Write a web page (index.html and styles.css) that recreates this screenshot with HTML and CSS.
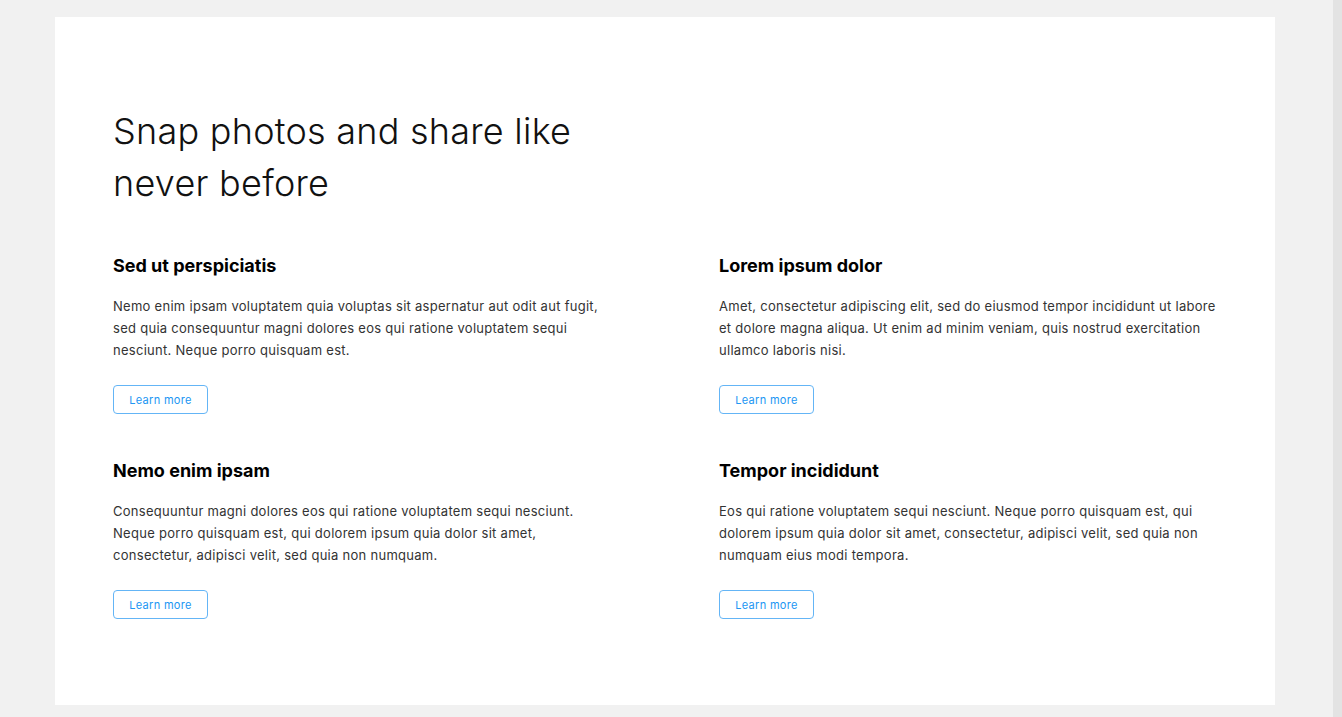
FILE: index.html
```html
<!DOCTYPE html>
<html lang="en">
<head>
<meta charset="utf-8">
<title>Snap photos</title>
<link rel="stylesheet" href="styles.css">
</head>
<body>
<div class="viewport">
  <main class="card">
    <h1 class="title">Snap photos and share like<br>never before</h1>
    <div class="features">
      <section class="feature">
        <h2 class="feature-title">Sed ut perspiciatis</h2>
        <p class="feature-text">Nemo enim ipsam voluptatem quia voluptas sit aspernatur aut odit aut fugit, sed quia consequuntur magni dolores eos qui ratione voluptatem sequi nesciunt. Neque porro quisquam est.</p>
        <a class="btn" href="#">Learn more</a>
      </section>
      <section class="feature">
        <h2 class="feature-title">Lorem ipsum dolor</h2>
        <p class="feature-text">Amet, consectetur adipiscing elit, sed do eiusmod tempor incididunt ut labore et dolore magna aliqua. Ut enim ad minim veniam, quis nostrud exercitation ullamco laboris nisi.</p>
        <a class="btn" href="#">Learn more</a>
      </section>
      <section class="feature">
        <h2 class="feature-title">Nemo enim ipsam</h2>
        <p class="feature-text">Consequuntur magni dolores eos qui ratione voluptatem sequi nesciunt. Neque porro quisquam est, qui dolorem ipsum quia dolor sit amet, consectetur, adipisci velit, sed quia non numquam.</p>
        <a class="btn" href="#">Learn more</a>
      </section>
      <section class="feature">
        <h2 class="feature-title">Tempor incididunt</h2>
        <p class="feature-text">Eos qui ratione voluptatem sequi nesciunt. Neque porro quisquam est, qui dolorem ipsum quia dolor sit amet, consectetur, adipisci velit, sed quia non numquam eius modi tempora.</p>
        <a class="btn" href="#">Learn more</a>
      </section>
    </div>
  </main>
</div>
<div class="scrollbar"></div>
</body>
</html>
```
FILE: styles.css
```css
html, body {
  margin: 0;
  height: 100%;
}
body {
  background: #f1f1f1;
  display: flex;
  font-family: "Inter", "Open Sans", sans-serif;
  color: #000;
}
.viewport {
  flex: 1;
  padding: 17px 58px 12px 55px;
  display: flex;
}
.scrollbar {
  width: 9px;
  background: #e3e3e3;
}
.card {
  flex: 1;
  background: #fff;
  padding: 88px 54px 0 58px;
}
.title {
  margin: 0;
  font-size: 36px;
  font-weight: 300;
  line-height: 52px;
  letter-spacing: 0.25px;
  color: #111;
}
.features {
  margin-top: 45px;
  display: grid;
  grid-template-columns: 498px 1fr;
  column-gap: 108px;
  row-gap: 45px;
}
.feature {
  display: flex;
  flex-direction: column;
  align-items: flex-start;
}
.feature-title {
  margin: 0;
  font-size: 18px;
  font-weight: 700;
  line-height: 24px;
  color: #000;
}
.feature-text {
  margin: 17px 0 0;
  font-size: 13px;
  font-weight: 400;
  line-height: 22px;
  letter-spacing: 0.28px;
  color: #333;
}
.btn {
  margin-top: 24px;
  width: 95px;
  height: 29px;
  box-sizing: border-box;
  border: 1px solid #64b5f6;
  border-radius: 4px;
  display: flex;
  align-items: center;
  justify-content: center;
  font-size: 11px;
  letter-spacing: 0.3px;
  color: #2196f3;
  text-decoration: none;
}
```
